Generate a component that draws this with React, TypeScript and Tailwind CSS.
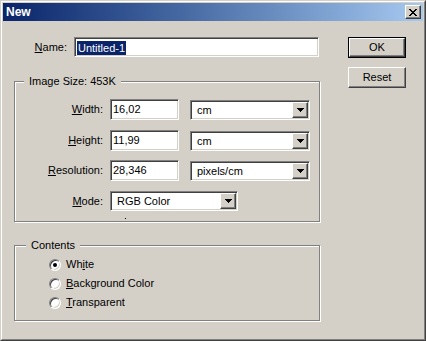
import React from 'react';

const raised = 'border border-t-white border-l-white border-r-[#404040] border-b-[#404040] shadow-[inset_-1px_-1px_0_#808080]';
const sunken = 'border border-t-[#808080] border-l-[#808080] border-r-white border-b-white shadow-[inset_1px_1px_0_#404040,inset_-1px_-1px_0_#d4d0c8] bg-white';
const etched = 'border border-[#808080] shadow-[inset_1px_1px_0_#fff,1px_1px_0_#fff]';

function Arrow() {
  return (
    <svg width="7" height="4" viewBox="0 0 7 4" shapeRendering="crispEdges">
      <rect x="0" y="0" width="7" height="1" fill="#000" />
      <rect x="1" y="1" width="5" height="1" fill="#000" />
      <rect x="2" y="2" width="3" height="1" fill="#000" />
      <rect x="3" y="3" width="1" height="1" fill="#000" />
    </svg>
  );
}

function CloseGlyph() {
  const rows = ['11000011', '01100110', '00111100', '00011000', '00111100', '01100110', '11000011'];
  return (
    <svg width="8" height="7" viewBox="0 0 8 7" shapeRendering="crispEdges">
      {rows.flatMap((r, y) =>
        r.split('').map((c, x) => (c === '1' ? <rect key={`${x}-${y}`} x={x} y={y} width="1" height="1" fill="#000" /> : null))
      )}
    </svg>
  );
}

function Combo({ value, className }: { value: string; className: string }) {
  return (
    <div className={`${sunken} ${className} h-[20px] p-px flex items-stretch`}>
      <div className="flex-1 pl-[5px] leading-[16px]">{value}</div>
      <div className={`${raised} w-[16px] flex items-center justify-center bg-[#d4d0c8]`}>
        <Arrow />
      </div>
    </div>
  );
}

function Field({ value }: { value: string }) {
  return <div className={`${sunken} w-[69px] h-[21px] pl-[2px] leading-[19px]`}>{value}</div>;
}

function Row({ label, value, unit, className = '' }: { label: React.ReactNode; value: string; unit: string; className?: string }) {
  return (
    <div className={`flex items-end ${className}`}>
      <div className="w-[88px] text-right h-[21px] leading-[21px]">{label}</div>
      <div className="ml-[7px]">
        <Field value={value} />
      </div>
      <Combo value={unit} className="ml-[11px] w-[120px]" />
    </div>
  );
}

function Radio({ checked, children }: { checked?: boolean; children: React.ReactNode }) {
  return (
    <div className="flex items-center h-[19px]">
      <div className="w-[12px] h-[12px] rounded-full border border-t-[#808080] border-l-[#808080] border-r-white border-b-white shadow-[inset_1px_1px_0_#404040,inset_-1px_-1px_0_#d4d0c8] bg-white flex items-center justify-center">
        {checked && <div className="w-[4px] h-[4px] rounded-full bg-black" />}
      </div>
      <span className="ml-[5px]">{children}</span>
    </div>
  );
}

export default function App() {
  return (
    <div className="w-[426px] h-[341px] bg-[#d4d0c8] border border-t-[#d4d0c8] border-l-[#d4d0c8] border-r-[#404040] border-b-[#404040] font-['Liberation_Sans',Arial,sans-serif] text-[11px] text-black">
      <div className="h-full border border-t-white border-l-white border-r-[#808080] border-b-[#808080] p-px flex flex-col">
        <div className="h-[18px] flex items-center justify-between bg-gradient-to-r from-[#0a246a] to-[#a6caf0]">
          <span className="ml-[3px] text-white font-bold text-[12px] leading-[18px]">New</span>
          <div className={`${raised} bg-[#d4d0c8] w-[16px] h-[14px] mr-[2px] flex items-center justify-center`}>
            <CloseGlyph />
          </div>
        </div>

        <div className="flex pl-[11px] pt-[16px]">
          <div className="w-[306px]">
            <div className="flex items-center">
              <div className="w-[53px] text-right"><span className="underline">N</span>ame:</div>
              <div className={`${sunken} ml-[7px] w-[245px] h-[20px] pl-[2px] pt-[2px]`}>
                <span className="bg-[#0a246a] text-white px-px leading-[14px] inline-block">Untitled-1</span>
              </div>
            </div>

            <div className={`${etched} relative mt-[24px] h-[141px]`}>
              <div className="absolute -top-[8px] left-[9px] px-[5px] bg-[#d4d0c8] leading-[14px]">Image Size: 453K</div>
              <div className="pt-[17px]">
                <Row label={<><span className="underline">W</span>idth:</>} value="16,02" unit="cm" />
                <Row label={<><span className="underline">H</span>eight:</>} value="11,99" unit="cm" className="mt-[10px]" />
                <Row label={<><span className="underline">R</span>esolution:</>} value="28,346" unit="pixels/cm" className="mt-[9px]" />
                <div className="flex items-center mt-[10px]">
                  <div className="w-[88px] text-right"><span className="underline">M</span>ode:</div>
                  <Combo value="RGB Color" className="ml-[7px] w-[128px]" />
                </div>
                <div className="ml-[110px] mt-[7px] w-px h-px bg-black" />
              </div>
            </div>

            <div className={`${etched} relative mt-[23px] h-[76px]`}>
              <div className="absolute -top-[8px] left-[11px] px-[5px] bg-[#d4d0c8] leading-[14px]">Contents</div>
              <div className="pl-[34px] pt-[9px]">
                <Radio checked>Wh<span className="underline">i</span>te</Radio>
                <Radio><span className="underline">B</span>ackground Color</Radio>
                <Radio><span className="underline">T</span>ransparent</Radio>
              </div>
            </div>
          </div>

          <div className="ml-[28px] flex flex-col">
            <div className="w-[58px] h-[21px] border border-black">
              <div className={`${raised} h-full flex items-center justify-center`}>OK</div>
            </div>
            <div className={`${raised} mt-[9px] w-[58px] h-[21px] flex items-center justify-center`}>Reset</div>
          </div>
        </div>
      </div>
    </div>
  );
}
